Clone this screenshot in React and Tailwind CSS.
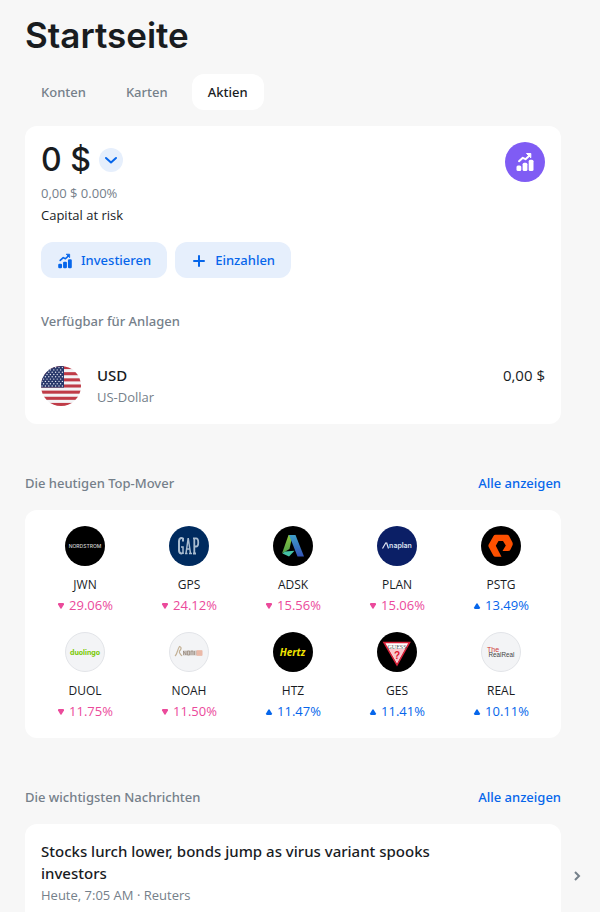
const tabs = [
  { id: 'accounts', label: 'Konten' },
  { id: 'cards', label: 'Karten' },
  { id: 'stocks', label: 'Aktien', active: true },
];

const movers = [
  { ticker: 'JWN', change: '29.06%', logo: NordstromLogo },
  { ticker: 'GPS', change: '24.12%', logo: GapLogo },
  { ticker: 'ADSK', change: '15.56%', logo: AutodeskLogo },
  { ticker: 'PLAN', change: '15.06%', logo: AnaplanLogo },
  { ticker: 'PSTG', change: '13.49%', up: true, logo: PureLogo },
  { ticker: 'DUOL', change: '11.75%', logo: DuolingoLogo },
  { ticker: 'NOAH', change: '11.50%', logo: NoahLogo },
  { ticker: 'HTZ', change: '11.47%', up: true, logo: HertzLogo },
  { ticker: 'GES', change: '11.41%', up: true, logo: GuessLogo },
  { ticker: 'REAL', change: '10.11%', up: true, logo: RealLogo },
];

function Disc({ fill, border, children }) {
  return (
    <svg className="size-10" viewBox="0 0 40 40" aria-hidden="true">
      <circle cx="20" cy="20" r={border ? 19.5 : 20} fill={fill} stroke={border} />
      {children}
    </svg>
  );
}

function NordstromLogo() {
  return (
    <Disc fill="#000">
      <text x="20" y="22" textAnchor="middle" fontSize="5" fontWeight="500" fill="#d4d4d4" className="font-['Inter',sans-serif]">NORDSTROM</text>
    </Disc>
  );
}

function GapLogo() {
  return (
    <Disc fill="#002b5f">
      <g fill="none" stroke="#a9bccf">
        <path d="M14 15.5V12.5C12.5 11.5 10 12 10 15V24C10 28 13 28 14 26.5" strokeWidth="2" />
        <path d="M14 28V21H12" strokeWidth="1.5" />
        <path d="M17 27.5L19.2 12L21.5 27.5M18 23H21M16 27.5H18.5M20 27.5H23" strokeWidth="1.5" />
        <path d="M25.3 12V27.5M24 27.5H27M24 12.4H27C30 12.4 30 20.5 27 20.5H25.5" strokeWidth="1.8" />
      </g>
    </Disc>
  );
}

function AutodeskLogo() {
  return (
    <Disc fill="#000">
      <defs>
        <linearGradient id="adsk-left" x1="0" y1="0" x2="0" y2="1">
          <stop offset="0" stopColor="#8cc63f" />
          <stop offset="1" stopColor="#4fa04a" />
        </linearGradient>
        <linearGradient id="adsk-right" x1="0" y1="0" x2="0" y2="1">
          <stop offset="0" stopColor="#3f9fc8" />
          <stop offset="1" stopColor="#3354b8" />
        </linearGradient>
      </defs>
      <path d="M15.5 9L19.5 9L16.5 23L9 27.5Z" fill="url(#adsk-left)" />
      <path d="M9.5 27.5L12 25.5L21.5 24.7L16 30.5Z" fill="#45c3a6" />
      <path d="M16 9H22.5L31 30.5H24.5Z" fill="url(#adsk-right)" />
    </Disc>
  );
}

function AnaplanLogo() {
  return (
    <Disc fill="#0b1f66">
      <path d="M5.5 22.5L9 16.5M9.5 16.5L11.5 22.5" stroke="#dfe4f2" strokeWidth="1.2" />
      <text x="23.5" y="22" textAnchor="middle" fontSize="7" fontWeight="600" fill="#dfe4f2" className="font-['Inter',sans-serif]">naplan</text>
    </Disc>
  );
}

function PureLogo() {
  return (
    <Disc fill="#000">
      <path
        d="M20.5 30.8H14.5Q13 30.8 12.3 29.5L7.7 21Q7.1 19.8 7.7 18.6L12.5 10Q13.2 8.7 14.6 8.7H26Q27.4 8.7 28.1 10L31.5 16.5Q32 18 31.5 19.2L29.5 23.5Q28.8 25 27 25H21.5L24.8 19.5L22 15H17.5L14.8 19.7L17.5 25Z"
        fill="#fe5000"
      />
    </Disc>
  );
}

function DuolingoLogo() {
  return (
    <Disc fill="#f3f4f6" border="#e2e4e8">
      <text x="20" y="22.5" textAnchor="middle" fontSize="7" fontWeight="700" fill="#78c800" className="font-['Inter',sans-serif]">duolingo</text>
    </Disc>
  );
}

function NoahLogo() {
  return (
    <Disc fill="#f3f4f6" border="#e2e4e8">
      <path d="M6 24C8.5 22 8 18 10.5 14.5C13.5 15.5 11.5 18 10.5 19C9.5 21 11.5 22 13 24" fill="none" stroke="#c3b196" strokeWidth="1.2" />
      <rect x="14" y="18.5" width="14" height="5" fill="#8a7868" opacity=".3" />
      <rect x="27" y="18.5" width="7" height="5" fill="#e58f70" opacity=".3" />
      <path d="M14.5 23V19L17 23V19M18.5 19H20.5V23H18.5ZM22 23V19H24V23M25.5 19V23" fill="none" stroke="#8a7868" strokeWidth=".8" opacity=".7" />
      <path d="M28 19H33M28 21H33M28 23H33" stroke="#e58f70" strokeWidth=".8" />
    </Disc>
  );
}

function HertzLogo() {
  return (
    <Disc fill="#000">
      <text x="19.5" y="23.5" textAnchor="middle" fontSize="10" fontWeight="700" fontStyle="italic" fill="#f2e600" className="font-['Open_Sans',sans-serif]">Hertz</text>
    </Disc>
  );
}

function GuessLogo() {
  return (
    <Disc fill="#000">
      <path d="M7 10.5H32.5L20 33Z" fill="#fff" stroke="#d8223a" strokeWidth="1.6" />
      <path d="M12 17H28L20 30.5Z" fill="#f4a4ae" opacity=".6" />
      <text x="20" y="16.5" textAnchor="middle" fontSize="6" fill="#555" className="font-['Liberation_Serif',serif]">GUESS</text>
      <text x="20" y="26.5" textAnchor="middle" fontSize="10" fontWeight="700" fill="#e0122e" className="font-['Liberation_Sans',sans-serif]">?</text>
    </Disc>
  );
}

function RealLogo() {
  return (
    <Disc fill="#f3f4f6" border="#e2e4e8">
      <text x="6" y="19.5" fontSize="7" fill="#cf3a36" className="font-['Liberation_Sans',sans-serif]">The</text>
      <text x="7.5" y="25" fontSize="6.3" fill="#444" className="font-['Liberation_Sans',sans-serif]">RealReal</text>
    </Disc>
  );
}

// Steigende Balken mit Pfeil
function ChartIcon({ className }) {
  return (
    <svg className={className} viewBox="2 2 20 20" fill="currentColor" aria-hidden="true">
      <rect x="3.5" y="15.5" width="4.8" height="5.5" rx="1.5" />
      <rect x="9.6" y="12.8" width="4.8" height="8.2" rx="1.5" />
      <rect x="15.7" y="9.8" width="4.8" height="11.2" rx="1.5" />
      <path d="M6 11.2L9.8 7.8L12.5 9.2L16 6" fill="none" stroke="currentColor" strokeWidth="2" strokeLinecap="round" strokeLinejoin="round" />
      <path d="M13.5 3.5H17.8V7.8Z" stroke="currentColor" strokeLinejoin="round" />
    </svg>
  );
}

function UsFlag() {
  const stars = [];
  for (let row = 0; row < 9; row++) {
    for (let col = 0; col < 7; col++) {
      stars.push({ x: (row % 2 ? 2.6 : 1) + col * 3.4, y: 1.6 + row * 2.3 });
    }
  }
  return (
    <svg className="size-10 shrink-0" viewBox="0 0 40 40" aria-hidden="true">
      <defs>
        <clipPath id="flag-circle">
          <circle cx="20" cy="20" r="20" />
        </clipPath>
      </defs>
      <g clipPath="url(#flag-circle)">
        <rect width="40" height="40" fill="#f4f4f6" />
        {[0, 2, 4, 6, 8, 10, 12].map((i) => (
          <rect key={i} y={(i * 40) / 13} width="40" height={40 / 13} fill="#bf3b47" />
        ))}
        <rect width="23" height="21.6" fill="#29386b" />
        {stars
          .filter((star) => star.x < 22.5)
          .map((star) => (
            <circle key={`${star.x}-${star.y}`} cx={star.x} cy={star.y} r=".7" fill="#e4e7f0" />
          ))}
      </g>
    </svg>
  );
}

function SectionHeader({ title }) {
  return (
    <div className="mt-12 mb-4 flex items-center justify-between font-['Noto_Sans',sans-serif] text-[13px] leading-[22px] font-medium">
      <h2 className="text-[#75808a]">{title}</h2>
      <a href="#" className="text-[#0666eb]">Alle anzeigen</a>
    </div>
  );
}

function ActionButton({ icon, children }) {
  return (
    <button className="flex h-9 items-center gap-2 rounded-xl bg-[#e6effc] px-4 pt-0.5 font-['Noto_Sans',sans-serif] text-[13px] font-medium text-[#0666eb]">
      {icon}
      {children}
    </button>
  );
}

function Mover({ ticker, change, up, logo: Logo }) {
  return (
    <li className="flex flex-col items-center text-[13px] leading-[21px]">
      <Logo />
      <span className="mt-2 text-xs leading-[21px] text-[#191c1f]">{ticker}</span>
      <span className={`flex items-center gap-1 ${up ? 'text-[#0666eb]' : 'text-[#eb4a9b]'}`}>
        <svg className="size-2" viewBox="0 0 8 8" fill="currentColor" aria-hidden="true">
          <path d={up ? 'M3.3 1.8Q4 .8 4.7 1.8L7 5.6Q7.3 7 6 7H2Q.7 7 1 5.6Z' : 'M3.3 6.2Q4 7.2 4.7 6.2L7 2.4Q7.3 1 6 1H2Q.7 1 1 2.4Z'} />
        </svg>
        {change}
      </span>
    </li>
  );
}

export default function App() {
  return (
    <div className="min-h-screen bg-[#f7f7f7] pt-3 pr-[39px] pb-6 pl-[25px] font-['Open_Sans','Noto_Sans',sans-serif] text-[#191c1f]">
      <h1 className="font-['Inter',sans-serif] text-[35px] leading-[46px] font-semibold">Startseite</h1>

      <nav className="mt-4 flex gap-2">
        {tabs.map((tab) => (
          <button
            key={tab.id}
            className={`h-9 rounded-xl px-4 pt-0.5 font-['Noto_Sans',sans-serif] text-[13px] font-medium ${tab.active ? 'bg-white text-[#191c1f]' : 'text-[#75808a]'}`}
          >
            {tab.label}
          </button>
        ))}
      </nav>

      {/* Depot */}
      <section className="mt-4 rounded-xl bg-white p-4">
        <div className="flex items-start justify-between">
          <div>
            <div className="flex h-9 items-center gap-2">
              <span className="font-['Inter',sans-serif] text-[32px] leading-9 font-medium">0 $</span>
              <button aria-label="Konto wählen" className="flex size-6 items-center justify-center rounded-full bg-[#e6effc] text-[#0666eb]">
                <svg className="size-4" viewBox="0 0 16 16" fill="none" stroke="currentColor" strokeWidth="2" strokeLinecap="round" strokeLinejoin="round">
                  <path d="M3 6L8 10.5L13 6" />
                </svg>
              </button>
            </div>
            <p className="mt-1 text-[13px] leading-[22px] text-[#75808a]">0,00 $ 0.00%</p>
            <p className="text-[13px] leading-[22px]">Capital at risk</p>
          </div>
          <div className="flex size-10 items-center justify-center rounded-full bg-[#7f5cf4] text-white">
            <ChartIcon className="size-5" />
          </div>
        </div>

        <div className="mt-4 flex gap-2">
          <ActionButton icon={<ChartIcon className="size-4" />}>Investieren</ActionButton>
          <ActionButton
            icon={
              <svg className="size-4" viewBox="0 0 16 16" stroke="currentColor" strokeWidth="2" strokeLinecap="round">
                <path d="M8 3V13M3 8H13" />
              </svg>
            }
          >
            Einzahlen
          </ActionButton>
        </div>

        <h2 className="mt-8 font-['Noto_Sans',sans-serif] text-[13px] leading-[22px] font-medium text-[#75808a]">Verfügbar für Anlagen</h2>
        <div className="mt-8 flex items-center gap-4">
          <UsFlag />
          <div className="flex-1">
            <p className="font-['Noto_Sans',sans-serif] text-[15px] leading-[22px] font-medium">USD</p>
            <p className="text-[13px] leading-[22px] text-[#75808a]">US-Dollar</p>
          </div>
          <p className="self-start text-[15px] leading-[22px]">0,00 $</p>
        </div>
      </section>

      <SectionHeader title="Die heutigen Top-Mover" />
      <ul className="grid grid-cols-5 gap-y-4 rounded-xl bg-white px-2 py-4">
        {movers.map((mover) => (
          <Mover key={mover.ticker} {...mover} />
        ))}
      </ul>

      <SectionHeader title="Die wichtigsten Nachrichten" />
      <div className="-mr-6 flex items-center gap-2">
        <article className="flex-1 rounded-xl bg-white px-4 pt-4 pb-[22px]">
          <h3 className="pr-20 font-['Noto_Sans',sans-serif] text-[15px] leading-[22px] font-medium">
            Stocks lurch lower, bonds jump as virus variant spooks investors
          </h3>
          <p className="text-[13px] leading-[22px] text-[#75808a]">Heute, 7:05 AM · Reuters</p>
        </article>
        <button aria-label="Weiter" className="text-[#75808a]">
          <svg className="size-4" viewBox="0 0 16 16" fill="none" stroke="currentColor" strokeWidth="2">
            <path d="M6 4L10 8L6 12" />
          </svg>
        </button>
      </div>
    </div>
  );
}
